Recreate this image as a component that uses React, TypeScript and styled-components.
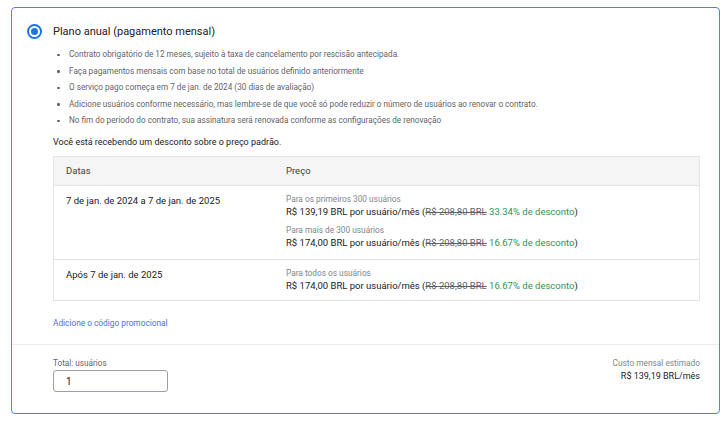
import React from 'react';
import styled, { createGlobalStyle } from 'styled-components';

const GlobalStyle = createGlobalStyle`
  html, body {
    margin: 0;
    padding: 0;
    background: #ffffff;
  }
  body {
    font-family: Roboto, "Liberation Sans", Arial, sans-serif;
    color: #202124;
  }
`;

const Page = styled.div`
  padding: 7px 8px 8px 11px;
`;

const Card = styled.div`
  width: 709px;
  height: 407px;
  box-sizing: border-box;
  border: 1.5px solid #4a82ea;
  border-radius: 4px;
  display: flex;
  flex-direction: column;
`;

const Body = styled.div`
  flex: 1;
  padding: 16px 19px 0 15px;
  display: flex;
  gap: 11px;
`;

const Radio = styled.span`
  width: 15px;
  height: 15px;
  flex-shrink: 0;
  border: 2px solid #1a73e8;
  border-radius: 50%;
  display: flex;
  align-items: center;
  justify-content: center;
  box-sizing: border-box;
  &::after {
    content: '';
    width: 7px;
    height: 7px;
    border-radius: 50%;
    background: #1a73e8;
  }
`;

const Main = styled.div`
  flex: 1;
  display: flex;
  flex-direction: column;
`;

const Title = styled.div`
  font-size: 11px;
  line-height: 16px;
  color: #202124;
`;

const Bullets = styled.ul`
  margin: 6px 0 0;
  padding: 0 0 0 16px;
  list-style: none;
`;

const Bullet = styled.li`
  position: relative;
  font-size: 8.2px;
  line-height: 16.5px;
  color: #5f6368;
  &::before {
    content: '';
    position: absolute;
    left: -12px;
    top: 7.5px;
    width: 2.5px;
    height: 2.5px;
    border-radius: 50%;
    background: #5f6368;
  }
`;

const Notice = styled.div`
  margin-top: 5px;
  font-size: 9px;
  line-height: 16px;
  color: #202124;
`;

const Table = styled.div`
  margin-top: 6px;
  border: 1px solid #e3e3e3;
  display: grid;
  grid-template-columns: 220px 1fr;
`;

const HeadCell = styled.div`
  background: #f5f5f5;
  height: 28px;
  padding: 0 12px;
  display: flex;
  align-items: center;
  font-size: 9.5px;
  color: #3c4043;
  border-bottom: 1px solid #e3e3e3;
`;

const Cell = styled.div<{ $last?: boolean }>`
  padding: 8px 12px ${(p) => (p.$last ? '8px' : '10px')};
  font-size: 9.5px;
  line-height: 13px;
  color: #202124;
  border-bottom: ${(p) => (p.$last ? 'none' : '1px solid #e3e3e3')};
`;

const Tier = styled.div`
  & + & {
    margin-top: 7px;
  }
`;

const TierLabel = styled.div`
  font-size: 8.3px;
  line-height: 11px;
  color: #80868b;
`;

const PriceLine = styled.div`
  font-size: 9.5px;
  line-height: 13px;
  color: #202124;
`;

const Strike = styled.span`
  text-decoration: line-through;
  color: #5f6368;
`;

const Discount = styled.span`
  color: #2f9256;
`;

const PromoLink = styled.a`
  margin-top: 16px;
  font-size: 8.3px;
  line-height: 12px;
  color: #4a72dc;
  text-decoration: none;
  cursor: pointer;
  align-self: flex-start;
`;

const Footer = styled.div`
  border-top: 1px solid #ececec;
  padding: 13px 19px 0 41px;
  height: 69px;
  box-sizing: border-box;
  display: flex;
  justify-content: space-between;
  align-items: flex-start;
`;

const Field = styled.div`
  display: flex;
  flex-direction: column;
`;

const FieldLabel = styled.label`
  font-size: 8.2px;
  line-height: 11px;
  color: #5f6368;
`;

const Input = styled.input`
  margin-top: 1px;
  width: 115px;
  height: 22px;
  box-sizing: border-box;
  border: 1px solid #9aa0a6;
  border-radius: 3px;
  padding: 0 12px;
  font-family: inherit;
  font-size: 10px;
  color: #202124;
  outline: none;
`;

const Estimate = styled.div`
  text-align: right;
  display: flex;
  flex-direction: column;
`;

const EstimateLabel = styled.div`
  font-size: 8.3px;
  line-height: 11px;
  color: #80868b;
`;

const EstimateValue = styled.div`
  font-size: 9px;
  line-height: 14px;
  color: #202124;
`;

const bullets = [
  'Contrato obrigatório de 12 meses, sujeito à taxa de cancelamento por rescisão antecipada.',
  'Faça pagamentos mensais com base no total de usuários definido anteriormente',
  'O serviço pago começa em 7 de jan. de 2024 (30 dias de avaliação)',
  'Adicione usuários conforme necessário, mas lembre-se de que você só pode reduzir o número de usuários ao renovar o contrato.',
  'No fim do período do contrato, sua assinatura será renovada conforme as configurações de renovação',
];

const rows = [
  {
    dates: '7 de jan. de 2024 a 7 de jan. de 2025',
    tiers: [
      { label: 'Para os primeiros 300 usuários', price: 'R$ 139,19', off: '33.34%' },
      { label: 'Para mais de 300 usuários', price: 'R$ 174,00', off: '16.67%' },
    ],
  },
  {
    dates: 'Após 7 de jan. de 2025',
    tiers: [{ label: 'Para todos os usuários', price: 'R$ 174,00', off: '16.67%' }],
  },
];

function App() {
  return (
    <>
      <GlobalStyle />
      <Page>
        <Card>
          <Body>
            <Radio />
            <Main>
              <Title>Plano anual (pagamento mensal)</Title>
              <Bullets>
                {bullets.map((b) => (
                  <Bullet key={b}>{b}</Bullet>
                ))}
              </Bullets>
              <Notice>Você está recebendo um desconto sobre o preço padrão.</Notice>
              <Table>
                <HeadCell>Datas</HeadCell>
                <HeadCell>Preço</HeadCell>
                {rows.map((r, i) => {
                  const last = i === rows.length - 1;
                  return (
                    <React.Fragment key={r.dates}>
                      <Cell $last={last}>{r.dates}</Cell>
                      <Cell $last={last}>
                        {r.tiers.map((t) => (
                          <Tier key={t.label}>
                            <TierLabel>{t.label}</TierLabel>
                            <PriceLine>
                              {t.price} BRL por usuário/mês (<Strike>R$ 208,80 BRL</Strike>{' '}
                              <Discount>{t.off} de desconto</Discount>)
                            </PriceLine>
                          </Tier>
                        ))}
                      </Cell>
                    </React.Fragment>
                  );
                })}
              </Table>
              <PromoLink>Adicione o código promocional</PromoLink>
            </Main>
          </Body>
          <Footer>
            <Field>
              <FieldLabel>Total: usuários</FieldLabel>
              <Input defaultValue="1" />
            </Field>
            <Estimate>
              <EstimateLabel>Custo mensal estimado</EstimateLabel>
              <EstimateValue>R$ 139,19 BRL/mês</EstimateValue>
            </Estimate>
          </Footer>
        </Card>
      </Page>
    </>
  );
}

export default App;
